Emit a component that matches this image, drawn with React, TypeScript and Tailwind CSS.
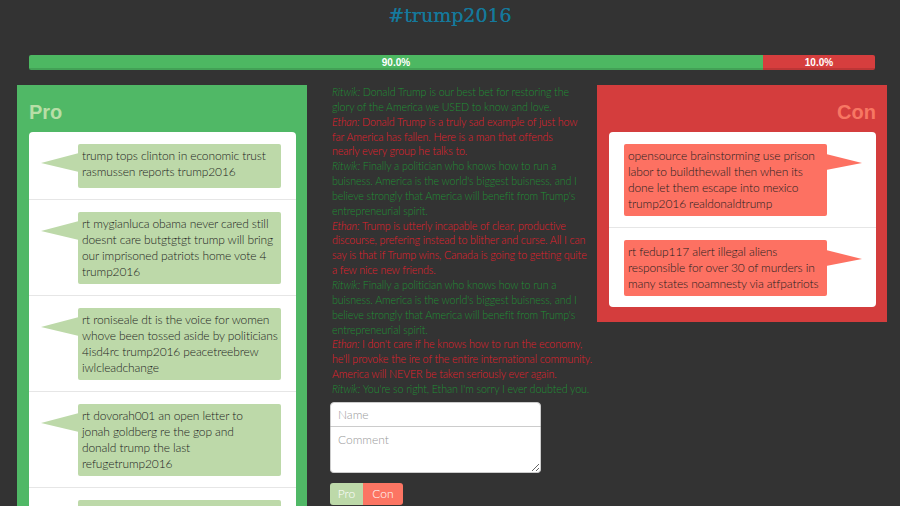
import React from 'react';

interface Tweet {
  lines: string[];
}

interface ChatLine {
  who: 'Ritwik' | 'Ethan';
  lines: string[];
}

const proTweets: Tweet[] = [
  { lines: ['trump tops clinton in economic trust', 'rasmussen reports trump2016'] },
  {
    lines: [
      'rt mygianluca obama never cared still',
      'doesnt care butgtgtgt trump will bring',
      'our imprisoned patriots home vote 4',
      'trump2016',
    ],
  },
  {
    lines: [
      'rt roniseale dt is the voice for women',
      'whove been tossed aside by politicians',
      '4isd4rc trump2016 peacetreebrew',
      'iwlcleadchange',
    ],
  },
  {
    lines: ['rt dovorah001 an open letter to', 'jonah goldberg re the gop and', 'donald trump the last', 'refugetrump2016'],
  },
  // cut off by the bottom of the window, only the top of the bubble shows
  { lines: [] },
];

const conTweets: Tweet[] = [
  {
    lines: [
      'opensource brainstorming use prison',
      'labor to buildthewall then when its',
      'done let them escape into mexico',
      'trump2016 realdonaldtrump',
    ],
  },
  {
    lines: ['rt fedup117 alert illegal aliens', 'responsible for over 30 of murders in', 'many states noamnesty via atfpatriots'],
  },
];

const chat: ChatLine[] = [
  { who: 'Ritwik', lines: ['Donald Trump is our best bet for restoring the', 'glory of the America we USED to know and love.'] },
  {
    who: 'Ethan',
    lines: [
      'Donald Trump is a truly sad example of just how',
      'far America has fallen. Here is a man that offends',
      'nearly every group he talks to.',
    ],
  },
  {
    who: 'Ritwik',
    lines: [
      'Finally a politician who knows how to run a',
      "buisness. America is the world's biggest buisness, and I",
      "believe strongly that America will benefit from Trump's",
      'entrepreneurial spirit.',
    ],
  },
  {
    who: 'Ethan',
    lines: [
      'Trump is utterly incapable of clear, productive',
      'discourse, prefering instead to blither and curse. All I can',
      'say is that if Trump wins, Canada is going to getting quite',
      'a few nice new friends.',
    ],
  },
  {
    who: 'Ritwik',
    lines: [
      'Finally a politician who knows how to run a',
      "buisness. America is the world's biggest buisness, and I",
      "believe strongly that America will benefit from Trump's",
      'entrepreneurial spirit.',
    ],
  },
  {
    who: 'Ethan',
    lines: [
      "I don't care if he knows how to run the economy,",
      "he'll provoke the ire of the entire international community.",
      'America will NEVER be taken seriously ever again.',
    ],
  },
  { who: 'Ritwik', lines: ["You're so right, Ethan I'm sorry I ever doubted you."] },
];

const thin = "font-['Lato','Open_Sans',sans-serif] font-light";

const Bubble: React.FC<{ tweet: Tweet; side: 'pro' | 'con' }> = ({ tweet, side }) => {
  const pro = side === 'pro';
  return (
    <div
      className={`relative min-h-[44px] w-[203px] rounded-[2px] px-1 py-1 text-[12px] leading-4 tracking-[-0.01em] text-[#1e1e1e] ${thin} ${
        pro ? 'ml-[49px] bg-[#bdd9a9]' : 'ml-[15px] bg-[#fd7162]'
      }`}
    >
      {pro ? (
        <svg className="absolute -left-[37px] top-0" width="38" height="30" viewBox="0 0 38 30">
          <polygon points="38,9 0,19 38,28" fill="#bdd9a9" />
        </svg>
      ) : (
        <svg className="absolute -right-[36px] top-0" width="37" height="30" viewBox="0 0 37 30">
          <polygon points="0,10 36,19 0,26" fill="#fd7162" />
        </svg>
      )}
      {tweet.lines.map((l, i) => (
        <div key={i} className="whitespace-nowrap">
          {l}
        </div>
      ))}
    </div>
  );
};

const TweetList: React.FC<{ tweets: Tweet[]; side: 'pro' | 'con' }> = ({ tweets, side }) => (
  <div className="rounded-[4px] bg-white">
    {tweets.map((t, i) => (
      <div
        key={i}
        className={`pt-3 pb-[11px] ${i < tweets.length - 1 ? 'border-b border-[#e6e6e6]' : ''}`}
      >
        <Bubble tweet={t} side={side} />
      </div>
    ))}
  </div>
);

export default function App() {
  return (
    <div className="min-h-screen bg-[#333333] font-['Liberation_Sans',sans-serif]">
      <h1 className="pt-[3px] text-center font-['DejaVu_Serif',serif] text-[19px] leading-6 text-[#15799c] [text-shadow:0_0_0.4px_#15799c]">
        #trump2016
      </h1>

      {/* vote bar */}
      <div className="ml-[29px] mr-[25px] mt-[28px] flex h-[15px] overflow-hidden rounded-[2px] text-[10px] font-bold leading-[15px] text-white">
        <div className="w-[734px] bg-[#4db862] text-center shadow-[inset_0_-2px_0_rgba(0,0,0,0.12)]">90.0%</div>
        <div className="flex-1 bg-[#d63e3e] text-center shadow-[inset_0_-2px_0_rgba(0,0,0,0.12)]">10.0%</div>
      </div>

      <div className="mt-[15px] flex items-start pl-[17px]">
        {/* pro */}
        <div className="w-[290px] bg-[#50b866] pb-3 pl-3 pr-[11px] pt-[15px]">
          <h2 className="mb-2 text-[20px] font-bold leading-6 text-[#b8dea6]">Pro</h2>
          <TweetList tweets={proTweets} side="pro" />
        </div>

        {/* chat + form */}
        <div className="ml-[23px] w-[264px]">
          <div className={`pl-[2px] text-[10.7px] leading-[14.85px] tracking-[-0.01em] ${thin}`}>
            {chat.map((c, i) => (
              <div key={i} className={c.who === 'Ritwik' ? 'text-[#1f8f33]' : 'text-[#e31f2c]'}>
                {c.lines.map((l, j) => (
                  <div key={j} className="whitespace-nowrap">
                    {j === 0 && <span className="italic">{c.who}: </span>}
                    {l}
                  </div>
                ))}
              </div>
            ))}
          </div>

          <form className="mt-[5px] w-[211px]" onSubmit={(e) => e.preventDefault()}>
            <input
              placeholder="Name"
              className={`block h-[25px] w-full rounded-t-[4px] border border-[#cccccc] bg-white px-[7px] text-[12px] text-[#333] placeholder:text-[#999] outline-none ${thin}`}
            />
            <textarea
              placeholder="Comment"
              className={`block h-[46px] w-full rounded-b-[4px] border border-t-0 border-[#cccccc] bg-white px-[7px] pt-[4px] text-[12px] text-[#333] placeholder:text-[#999] outline-none ${thin}`}
            />
            <div className="mt-[10px] flex">
              <button type="button" className={`h-[22px] w-[33px] rounded-l-[3px] bg-[#bdd9a9] text-[12px] text-white ${thin}`}>
                Pro
              </button>
              <button type="button" className={`h-[22px] w-[40px] rounded-r-[3px] bg-[#fc7563] text-[12px] text-white ${thin}`}>
                Con
              </button>
            </div>
          </form>
        </div>

        {/* con */}
        <div className="ml-[3px] w-[290px] bg-[#d43d3d] pb-[15px] pl-3 pr-[11px] pt-[15px]">
          <h2 className="mb-2 text-right text-[20px] font-bold leading-6 text-[#f77763]">Con</h2>
          <TweetList tweets={conTweets} side="con" />
        </div>
      </div>
    </div>
  );
}
